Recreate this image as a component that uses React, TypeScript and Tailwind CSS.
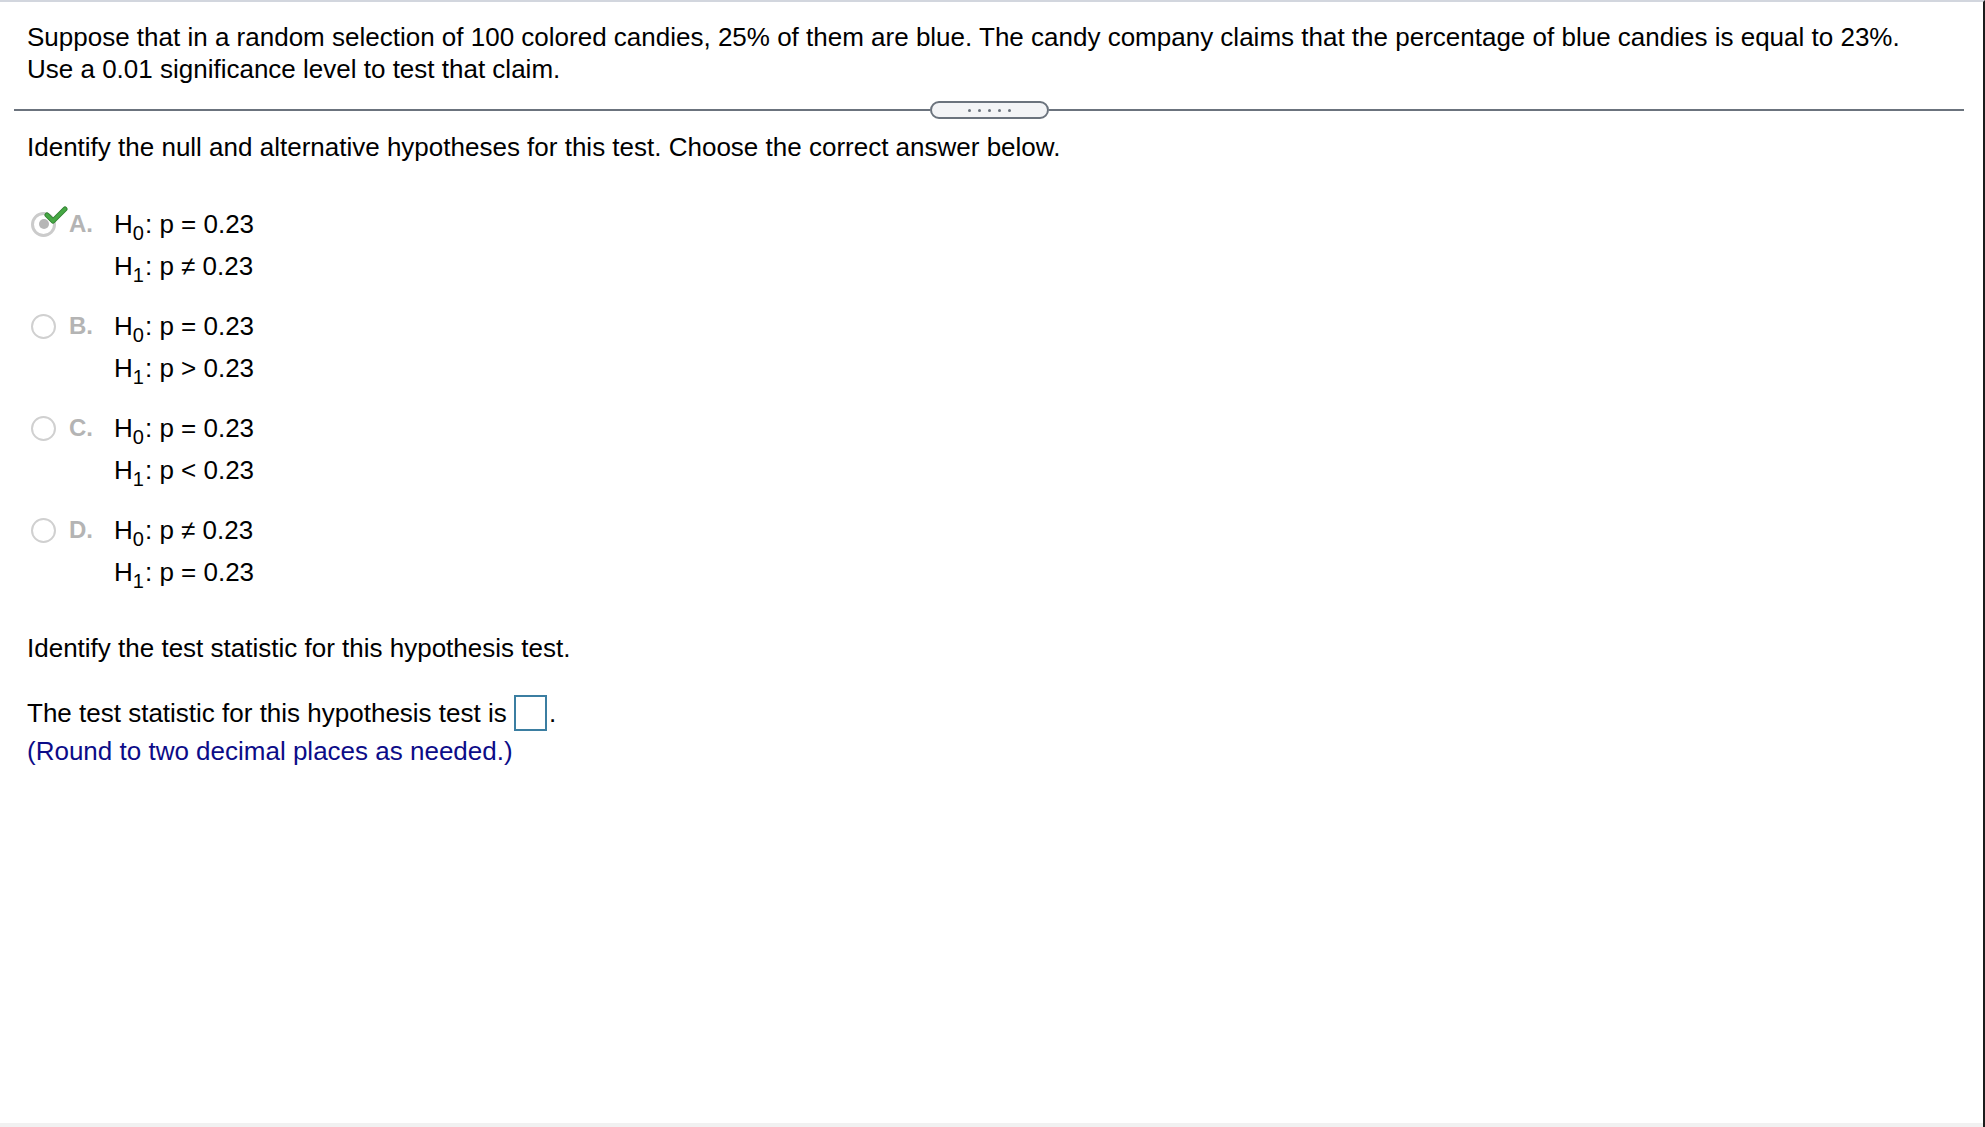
import React from "react";

type Option = {
  letter: string;
  h0: string;
  h1: string;
  selected?: boolean;
};

const options: Option[] = [
  { letter: "A.", h0: "p = 0.23", h1: "p \u2260 0.23", selected: true },
  { letter: "B.", h0: "p = 0.23", h1: "p > 0.23" },
  { letter: "C.", h0: "p = 0.23", h1: "p < 0.23" },
  { letter: "D.", h0: "p \u2260 0.23", h1: "p = 0.23" },
];

function Hyp({ sub, text }: { sub: string; text: string }) {
  return (
    <div className="h-[42px] whitespace-pre">
      H<span className="text-[20px] leading-none align-[-7px]">{sub}</span>
      <span className="ml-[1px]">:</span> {text}
    </div>
  );
}

function Radio({ selected }: { selected?: boolean }) {
  if (!selected) {
    return <div className="w-[25px] h-[25px] rounded-full border-2 border-[#d0d0d0] bg-white" />;
  }
  return (
    <div className="relative w-[25px] h-[25px]">
      <div className="w-[25px] h-[25px] rounded-full border-[3px] border-[#cbcbcb] bg-white flex items-center justify-center">
        <div className="w-[10px] h-[10px] rounded-full bg-[#b6b6b6]" />
      </div>
      {/* check mark */}
      <svg
        className="absolute left-[13px] top-[-6px]"
        width="24"
        height="20"
        viewBox="0 0 24 20"
      >
        <path d="M3 9 L9 15 L21 3" fill="none" stroke="#2f7f2f" strokeWidth="5" strokeLinecap="round" strokeLinejoin="round" />
        <path d="M3 9 L9 15 L21 3" fill="none" stroke="#46a844" strokeWidth="3.2" strokeLinecap="round" strokeLinejoin="round" />
      </svg>
    </div>
  );
}

export default function App() {
  return (
    <div className="min-h-screen flex flex-col bg-white border-t-2 border-t-[#d2d6de] border-r-2 border-r-[#1c1c1c] font-['Liberation_Sans',Arial,sans-serif] text-black text-[26px] leading-[32px]">
      {/* Question */}
      <div className="px-[27px] pt-[19px]">
        <p>
          Suppose that in a random selection of 100 colored candies, 25% of them are blue. The candy company claims
          that the percentage of blue candies is equal to 23%.
        </p>
        <p>Use a 0.01 significance level to test that claim.</p>
      </div>

      {/* Divider with expander */}
      <div className="ml-[14px] mr-[19px] mt-[16px] h-[18px] flex items-center">
        <div className="flex-1 h-[2px] bg-[#6b737d]" />
        <div className="w-[119px] h-[18px] rounded-full border-2 border-[#6b737d] bg-[#f3f4f6] flex items-center justify-center gap-[7px]">
          {[1, 2, 3, 4, 5].map((i) => (
            <span key={i} className="w-[3px] h-[3px] rounded-full bg-[#6b737d]" />
          ))}
        </div>
        <div className="flex-1 h-[2px] bg-[#6b737d]" />
      </div>

      <div className="px-[27px]">
        <p className="mt-[12px]">Identify the null and alternative hypotheses for this test. Choose the correct answer below.</p>

        {/* Options */}
        <div className="mt-[40px] flex flex-col gap-[18px]">
          {options.map((o) => (
            <div key={o.letter} className="flex">
              <div className="w-[87px] h-[42px] flex items-center pl-[4px]">
                <Radio selected={o.selected} />
                <span className="ml-[13px] text-[24px] font-bold text-[#b4b4b4]">{o.letter}</span>
              </div>
              <div className="leading-[42px]">
                <Hyp sub="0" text={o.h0} />
                <Hyp sub="1" text={o.h1} />
              </div>
            </div>
          ))}
        </div>

        <p className="mt-[39px]">Identify the test statistic for this hypothesis test.</p>

        <p className="mt-[31px]">
          The test statistic for this hypothesis test is{" "}
          <span className="inline-block w-[33px] h-[36px] border-2 border-[#3b7ea1] align-[-9px]" />
          <span className="ml-[2px]">.</span>
        </p>
        <p className="mt-[4px] text-[#0c0c88]">(Round to two decimal places as needed.)</p>
      </div>

      <div className="mt-auto h-[4px] bg-[#f1f1f1]" />
    </div>
  );
}
